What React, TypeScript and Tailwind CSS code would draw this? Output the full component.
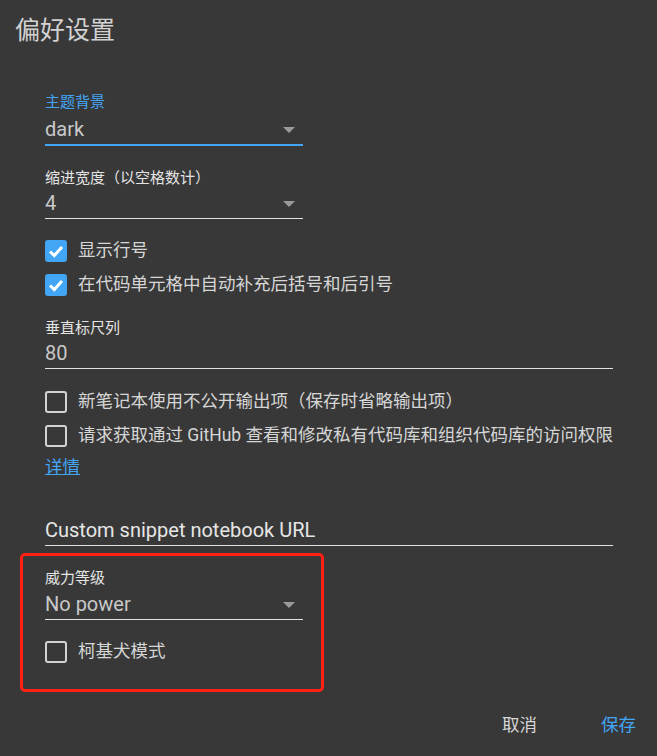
import React from 'react';

const BLUE = 'text-[#42a5f5]';

function Arrow() {
  return (
    <svg width="12" height="6" viewBox="0 0 12 6" className="absolute right-[8px] top-[11px]">
      <path d="M0 0 L12 0 L6 6 Z" fill="#9a9a9a" />
    </svg>
  );
}

function Checkbox({ checked, label }: { checked?: boolean; label: string }) {
  return (
    <div className="flex items-center h-[23px]">
      {checked ? (
        <div className="w-[22px] h-[22px] rounded-[3px] bg-[#42a5f5] flex items-center justify-center">
          <svg width="22" height="22" viewBox="0 0 22 22">
            <path d="M5 11.5 L9.3 15.5 L17 7" stroke="#fff" strokeWidth="3" fill="none" />
          </svg>
        </div>
      ) : (
        <div className="w-[22px] h-[22px] rounded-[3px] border-[2.5px] border-[#d2d2d2]" />
      )}
      <span className="ml-[11px] text-[17.5px] leading-[23px] text-[#d6d6d6]">{label}</span>
    </div>
  );
}

function Label({ text, active, className = '' }: { text: string; active?: boolean; className?: string }) {
  return (
    <div className={`text-[15px] leading-[20px] ${active ? BLUE : 'text-[#e4e4e4]'} ${className}`}>{text}</div>
  );
}

function Select({ value, active, className = '' }: { value: string; active?: boolean; className?: string }) {
  return (
    <div
      className={`relative w-[258px] h-[28px] text-[20px] leading-[26px] text-[#c9c9c9] ${
        active ? 'border-b-2 border-[#42a5f5] box-content' : 'border-b border-[#e2e2e2] box-content'
      } ${className}`}
    >
      {value}
      <Arrow />
    </div>
  );
}

function TextField({ value, bright, className = '' }: { value: string; bright?: boolean; className?: string }) {
  return (
    <div
      className={`w-[568px] h-[28px] box-content border-b border-[#e2e2e2] text-[20px] leading-[26px] ${
        bright ? 'text-[#e6e6e6]' : 'text-[#c9c9c9]'
      } ${className}`}
    >
      {value}
    </div>
  );
}

export default function App() {
  return (
    <div className="w-[657px] h-[756px] overflow-hidden bg-[#383838] font-[Roboto,'Noto_Sans_CJK_SC',sans-serif]">
      <div className="pt-[15px] pl-[15px] text-[25px] leading-[32px] text-[#d2d2d2]">偏好设置</div>

      <div className="pl-[45px]">
        <Label text="主题背景" active className="mt-[45px]" />
        <Select value="dark" active className="mt-[4px]" />

        <Label text="缩进宽度（以空格数计）" className="mt-[22px]" />
        <Select value="4" className="mt-[2px]" />

        <div className="mt-[20px]">
          <Checkbox checked label="显示行号" />
        </div>
        <div className="mt-[11px]">
          <Checkbox checked label="在代码单元格中自动补充后括号和后引号" />
        </div>

        <Label text="垂直标尺列" className="mt-[22px]" />
        <TextField value="80" className="mt-[2px]" />

        <div className="mt-[21px]">
          <Checkbox label="新笔记本使用不公开输出项（保存时省略输出项）" />
        </div>
        <div className="mt-[11px]">
          <Checkbox label="请求获取通过 GitHub 查看和修改私有代码库和组织代码库的访问权限" />
        </div>
        <div className={`mt-[8px] text-[17.5px] leading-[24px] ${BLUE} underline underline-offset-[1px]`}>详情</div>

        <TextField value="Custom snippet notebook URL" bright className="mt-[38px]" />
      </div>

      {/* highlighted power section */}
      <div className="ml-[20px] mt-[7px] w-[304px] h-[139px] border-[3px] border-[#ff2214] rounded-[5px] pl-[22px] pt-[12px]">
        <Label text="威力等级" />
        <Select value="No power" className="mt-[3px]" />
        <div className="mt-[20px]">
          <Checkbox label="柯基犬模式" />
        </div>
      </div>

      <div className="flex justify-end gap-[64px] pr-[21px] mt-[21px] text-[17.5px] leading-[24px]">
        <span className="text-[#d6d6d6]">取消</span>
        <span className={BLUE}>保存</span>
      </div>
    </div>
  );
}
